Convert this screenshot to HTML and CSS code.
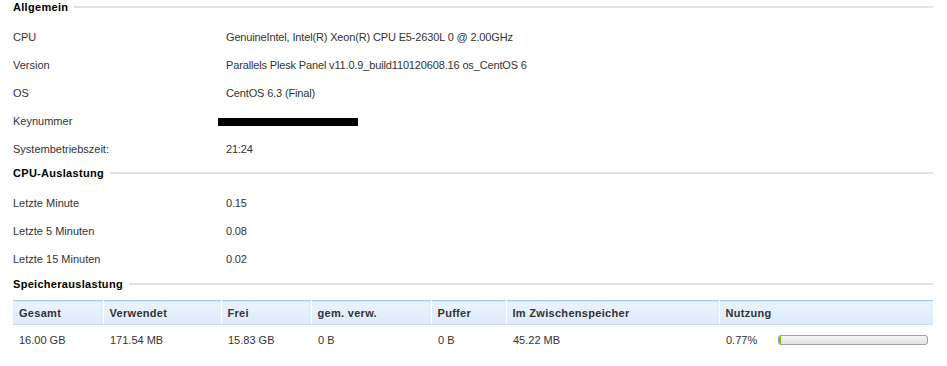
FILE: index.html
```html
<!DOCTYPE html>
<html lang="de">
<head>
<meta charset="utf-8">
<title>Systeminformationen</title>
<link rel="stylesheet" href="styles.css">
</head>
<body>
<div class="page">
  <section class="section sec-general">
    <h2 class="legend"><span>Allgemein</span></h2>
    <div class="rows">
      <div class="row"><div class="label">CPU</div><div class="value">GenuineIntel, Intel(R) Xeon(R) CPU E5-2630L 0 @ 2.00GHz</div></div>
      <div class="row"><div class="label">Version</div><div class="value">Parallels Plesk Panel v11.0.9_build110120608.16 os_CentOS 6</div></div>
      <div class="row"><div class="label">OS</div><div class="value">CentOS 6.3 (Final)</div></div>
      <div class="row"><div class="label">Keynummer</div><div class="value"><span class="redacted"></span></div></div>
      <div class="row"><div class="label">Systembetriebszeit:</div><div class="value">21:24</div></div>
    </div>
  </section>
  <section class="section sec-cpu">
    <h2 class="legend"><span>CPU-Auslastung</span></h2>
    <div class="rows">
      <div class="row"><div class="label">Letzte Minute</div><div class="value">0.15</div></div>
      <div class="row"><div class="label">Letzte 5 Minuten</div><div class="value">0.08</div></div>
      <div class="row"><div class="label">Letzte 15 Minuten</div><div class="value">0.02</div></div>
    </div>
  </section>
  <section class="section sec-mem">
    <h2 class="legend"><span>Speicherauslastung</span></h2>
    <table class="grid">
      <thead>
        <tr>
          <th class="c1">Gesamt</th>
          <th class="c2">Verwendet</th>
          <th class="c3">Frei</th>
          <th class="c4">gem. verw.</th>
          <th class="c5">Puffer</th>
          <th class="c6">Im Zwischenspeicher</th>
          <th class="c7">Nutzung</th>
        </tr>
      </thead>
      <tbody>
        <tr>
          <td>16.00 GB</td>
          <td>171.54 MB</td>
          <td>15.83 GB</td>
          <td>0 B</td>
          <td>0 B</td>
          <td>45.22 MB</td>
          <td><div class="usage"><span class="pct">0.77%</span><div class="bar"><div class="fill" style="width:0.77%"></div></div></div></td>
        </tr>
      </tbody>
    </table>
  </section>
</div>
</body>
</html>
```

FILE: styles.css
```css
html, body {
  margin: 0;
  padding: 0;
  background: #ffffff;
}
body {
  font-family: "Liberation Sans", Arial, sans-serif;
  font-size: 11px;
  color: #333333;
}
.page {
  width: 920px;
  padding-left: 13px;
}
.legend {
  display: flex;
  align-items: center;
  gap: 6px;
  margin: 0;
  height: 14px;
  line-height: 14px;
  font-size: 11px;
  font-weight: bold;
  letter-spacing: 0.3px;
  color: #000000;
}
.legend::after {
  content: "";
  flex: 1;
  height: 0;
  border-top: 2px solid #e3e3e3;
}
.rows {
  margin-top: 9px;
}
.row {
  display: grid;
  grid-template-columns: 213px 1fr;
  height: 28px;
  line-height: 28px;
}
.label {
  color: #333333;
}
.value {
  color: #333333;
  letter-spacing: -0.15px;
}
.redacted {
  display: inline-block;
  width: 140px;
  height: 8px;
  background: #000;
  margin-left: -8px;
  vertical-align: -1px;
}
.sec-cpu {
  margin-top: 3px;
}
.sec-mem {
  margin-top: 4px;
}
.grid {
  margin-top: 9px;
  width: 920px;
  border-collapse: collapse;
  table-layout: fixed;
}
.grid thead tr {
  background: linear-gradient(#eaf3fc, #dcebfb);
  border-top: 1px solid #a9c6ef;
}
.grid th,
.grid td {
  box-sizing: border-box;
}
.grid th {
  height: 24px;
  padding: 0 0 0 6px;
  text-align: left;
  font-weight: bold;
  letter-spacing: 0.3px;
  color: #333333;
  border-left: 1px solid #ffffff;
  border-bottom: 1px solid #c9dcf3;
}
.grid th:first-child {
  border-left: none;
}
.c1 { width: 90px; }
.c2 { width: 118px; }
.c3 { width: 90px; }
.c4 { width: 120px; }
.c5 { width: 75px; }
.c6 { width: 213px; }
.grid td {
  height: 30px;
  padding: 0 0 0 6px;
  color: #333333;
  vertical-align: middle;
}
.grid td + td {
  padding-left: 7px;
}
.usage {
  display: flex;
  align-items: center;
}
.pct {
  width: 52px;
}
.bar {
  width: 148px;
  height: 8px;
  border: 1px solid #a0a0a0;
  border-radius: 3px;
  background: linear-gradient(#f6f6f6, #e2e2e2);
  overflow: hidden;
}
.fill {
  height: 100%;
  min-width: 2px;
  background: #66cc00;
}
```
